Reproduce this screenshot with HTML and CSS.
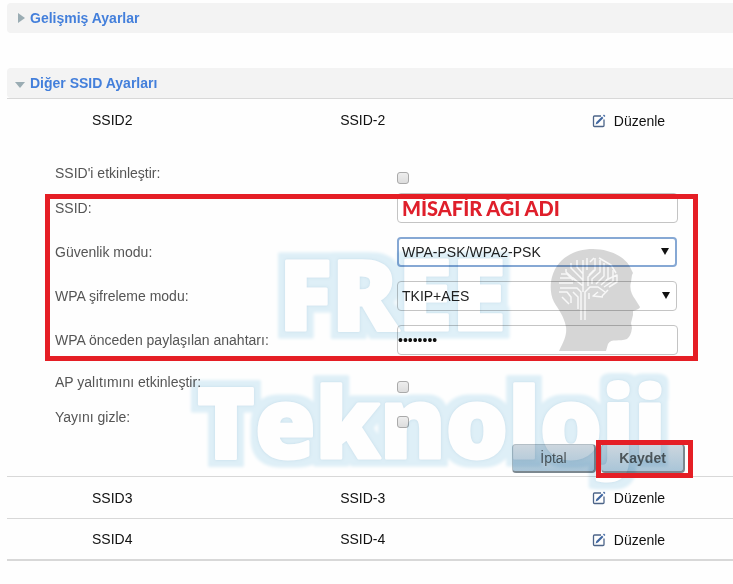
FILE: index.html
```
<!DOCTYPE html>
<html lang="tr">

<head>
     <meta charset="UTF-8">
     <meta name="viewport" content="width=device-width, initial-scale=1.0">
     <title>SSID Ayarları</title>
     <link rel="stylesheet" href="styles.css">
</head>

<body>
     <svg class="symbols">
          <symbol id="edit" viewBox="0 0 14 14">
               <path d="M9 2H2.5Q1.5 2 1.5 3V11.5Q1.5 12.5 2.5 12.5H11Q12 12.5 12 11.5V5.5" fill="none" stroke="#4c6488" stroke-width="1.3" />
               <path d="M3.6 10.4L4.4 8L10 2.6L11.4 4L6 9.6Z" fill="#3f66a0" />
               <path d="M11 1.6L12 .6L13.4 2L12.4 3Z" fill="#3f66a0" />
          </symbol>
     </svg>

     <h2 class="bar closed">Gelişmiş Ayarlar</h2>
     <h2 class="bar open">Diğer SSID Ayarları</h2>

     <table class="ssids">
          <tr>
               <td>SSID2</td>
               <td>SSID-2</td>
               <td><a href="#"><svg class="icon"><use href="#edit" /></svg>Düzenle</a></td>
          </tr>
          <tr class="details">
               <td colspan="3">
                    <form class="settings">
                         <div class="row check">
                              <label for="enable">SSID'i etkinleştir:</label>
                              <input type="checkbox" id="enable">
                         </div>

                         <div class="fields">
                              <div class="row">
                                   <label for="ssid">SSID:</label>
                                   <input type="text" id="ssid" value="MİSAFİR AĞI ADI">
                              </div>
                              <div class="row">
                                   <label for="security">Güvenlik modu:</label>
                                   <div class="select active">
                                        <select id="security">
                                             <option>WPA-PSK/WPA2-PSK</option>
                                        </select>
                                   </div>
                              </div>
                              <div class="row">
                                   <label for="cipher">WPA şifreleme modu:</label>
                                   <div class="select">
                                        <select id="cipher">
                                             <option>TKIP+AES</option>
                                        </select>
                                   </div>
                              </div>
                              <div class="row">
                                   <label for="key">WPA önceden paylaşılan anahtarı:</label>
                                   <input type="password" id="key" value="12345678">
                              </div>
                         </div>

                         <div class="row check">
                              <label for="isolation">AP yalıtımını etkinleştir:</label>
                              <input type="checkbox" id="isolation">
                         </div>
                         <div class="row check">
                              <label for="hide">Yayını gizle:</label>
                              <input type="checkbox" id="hide">
                         </div>

                         <div class="buttons">
                              <button type="button">İptal</button>
                              <span class="marked"><button type="button" class="save">Kaydet</button></span>
                         </div>

                         <svg class="watermark" width="510" height="270" viewBox="180 240 510 270">
                              <filter id="halo" x="-10%" y="-20%" width="120%" height="140%">
                                   <feMorphology in="SourceAlpha" operator="dilate" radius="7" result="wide" />
                                   <feGaussianBlur in="wide" stdDeviation="1.5" result="soft" />
                                   <feFlood flood-color="#dff0f8" />
                                   <feComposite in2="soft" operator="in" result="outer" />
                                   <feGaussianBlur in="SourceAlpha" stdDeviation="1.5" result="edge" />
                                   <feFlood flood-color="#c4dcea" />
                                   <feComposite in2="edge" operator="in" result="inner" />
                                   <feMerge>
                                        <feMergeNode in="outer" />
                                        <feMergeNode in="inner" />
                                        <feMergeNode in="SourceGraphic" />
                                   </feMerge>
                              </filter>
                              <g class="words">
                                   <text x="279" y="330">FREE</text>
                                   <text x="197" y="458">Teknoloji</text>
                              </g>
                              <!-- head -->
                              <path fill="#000" fill-opacity=".16" d="M559 351C564 341 567 335 566 327C564 316 558 309 554 302C550 294 550 284 552 277C557 259 573 249 593 249C611 249 627 258 631 269L633 273L632 275L631 282C629 289 632 295 635 299L640 307Q640 309 633 311L633 315L632 319L631 323L632 328Q631 336 627 339C620 342 611 338 608 344L606 351Z" />
                              <!-- brain circuit -->
                              <g fill="none" stroke="#f8f8f8" stroke-width="1.5" stroke-linejoin="round">
                                   <path d="M581 320V292L577 288H560M585 320V292L590 287H598L605 292M583 292V260M583 286L573 278H560M583 280L571 268V263M583 274L577 267V260M588 286V277L595 270V258M592 284V279L600 272V260M596 284L604 276V263M601 285L608 279V267M604 287L613 281V270" />
                                   <path d="M559 292H567L571 297V303M562 297L569 304M573 292L578 297V309M559 283H573M561 274H567L573 280M566 269V272L576 281M587 258V270M590 262L594 258M599 258L611 265L616 273M606 280L617 275V282L609 287M608 290L602 296M598 292L593 296L603 297M589 293V299M589 275L594 270" />
                              </g>
                         </svg>
                    </form>
               </td>
          </tr>
          <tr>
               <td>SSID3</td>
               <td>SSID-3</td>
               <td><a href="#"><svg class="icon"><use href="#edit" /></svg>Düzenle</a></td>
          </tr>
          <tr>
               <td>SSID4</td>
               <td>SSID-4</td>
               <td><a href="#"><svg class="icon"><use href="#edit" /></svg>Düzenle</a></td>
          </tr>
     </table>
</body>

</html>
```

FILE: styles.css
```
*,
*::before,
*::after {
     box-sizing: border-box;
}

body {
     margin: 3px 0 0 7px;
     background: #fefefe;
     font-family: "Liberation Sans", Arial, sans-serif;
     font-size: 14px;
     line-height: 20px;
     color: #111;
}

.symbols {
     display: none;
}

.bar {
     display: flex;
     align-items: center;
     height: 30px;
     margin: 0 0 35px;
     padding-left: 8px;
     background: #f3f3f3;
     border-radius: 4px 0 0 4px;
     font-size: 14px;
     color: #437fdb;
}

.bar::before {
     content: "";
     border: 5px solid transparent;
}

.closed::before {
     margin: 0 5px 0 3px;
     border-left: 7px solid #9aacb3;
     border-right: 0;
}

.open {
     margin: 0;
}

.open::before {
     margin: 3px 5px 0 0;
     border-top: 6px solid #9aacb3;
     border-bottom: 0;
}

.ssids {
     width: 100%;
     table-layout: fixed;
     border-collapse: collapse;
     border-top: 1px solid #d8d8d8;
     border-bottom: 2px solid #d8d8d8;
}

.ssids td {
     width: 40%;
     height: 42px;
     padding: 1px 0 0;
     text-align: center;
}

.ssids td:first-child {
     width: 29%;
}

.ssids td:last-child {
     width: 31%;
     padding-left: 16px;
}

.ssids tr + tr + tr {
     border-top: 1px solid #d8d8d8;
}

.ssids .details td {
     padding: 0;
     text-align: left;
}

.ssids a {
     display: inline-flex;
     align-items: center;
     vertical-align: middle;
     color: #111;
     text-decoration: none;
}

.icon {
     width: 14px;
     height: 14px;
     margin-right: 8px;
}

/* settings form */

.settings {
     position: relative;
     padding: 17px 0 3px 48px;
     color: #555;
}

.row {
     display: flex;
     height: 30px;
     margin-bottom: 14px;
}

.row label {
     flex: none;
     width: 342px;
     padding-top: 5px;
}

.check {
     height: 35px;
     margin: 0;
}

.check input {
     appearance: none;
     width: 12px;
     height: 12px;
     margin: 14px 0 0;
     border: 1px solid #aaa;
     border-radius: 3px;
     background: linear-gradient(#eee, #ddd);
}

.fields {
     position: relative;
     margin-bottom: 12px;
}

.fields .row:last-child {
     margin: 0;
}

/* red frame over the fields */
.fields::after {
     content: "";
     position: absolute;
     z-index: 2;
     top: 1px;
     bottom: -6px;
     left: -10px;
     width: 653px;
     border: 5px solid #e51e25;
     pointer-events: none;
}

.row input[type="text"],
.row input[type="password"],
.select {
     width: 281px;
     height: 30px;
     border: 1px solid #c4c4c4;
     border-radius: 4px;
     background: #fff;
}

.row input[type="text"] {
     padding: 0 4px;
     font: 900 20px Lato, sans-serif;
     color: #df1f2b;
}

.row input[type="password"] {
     padding: 0;
     font: 14px "Liberation Sans", Arial, sans-serif;
     color: #111;
}

.select {
     position: relative;
     width: 280px;
}

.select.active {
     border: 2px solid #86a8d4;
}

.select select {
     appearance: none;
     width: 100%;
     height: 100%;
     padding: 0 4px;
     border: 0;
     background: none;
     font: 14px "Liberation Sans", Arial, sans-serif;
     color: #222;
}

.select.active select {
     padding: 0 3px;
}

.select::after {
     content: "";
     position: absolute;
     top: 50%;
     right: 6px;
     margin-top: -4px;
     border: 4px solid transparent;
     border-top: 7px solid #111;
     border-bottom: 0;
     pointer-events: none;
}

.buttons {
     display: flex;
     width: 638px;
     height: 31px;
     margin-top: 5px;
     justify-content: flex-end;
}

.buttons button {
     width: 84px;
     height: 29px;
     margin-top: 2px;
     padding: 0;
     border: 1px solid #b4bfc6;
     border-right: 2px solid #7c8890;
     border-bottom: 2px solid #7c8890;
     border-radius: 4px;
     background: linear-gradient(#ccd6de, #a9c5d8);
     font: 14px "Liberation Sans", Arial, sans-serif;
     color: #4d5559;
}

.marked {
     position: relative;
     width: 97px;
     padding-left: 5px;
}

.marked::after {
     content: "";
     position: absolute;
     z-index: 2;
     top: -2px;
     left: 0;
     width: 97px;
     height: 38px;
     border: 5px solid #e51e25;
     pointer-events: none;
}

.buttons .save {
     font-weight: bold;
}

.watermark {
     position: absolute;
     z-index: 1;
     top: 99px;
     left: 173px;
     overflow: visible;
     mix-blend-mode: multiply;
     pointer-events: none;
}

.words {
     font: 800 98px "Open Sans", sans-serif;
     fill: #fff;
     stroke: #fff;
     stroke-width: 3px;
     stroke-linejoin: round;
     filter: url(#halo);
}
```
